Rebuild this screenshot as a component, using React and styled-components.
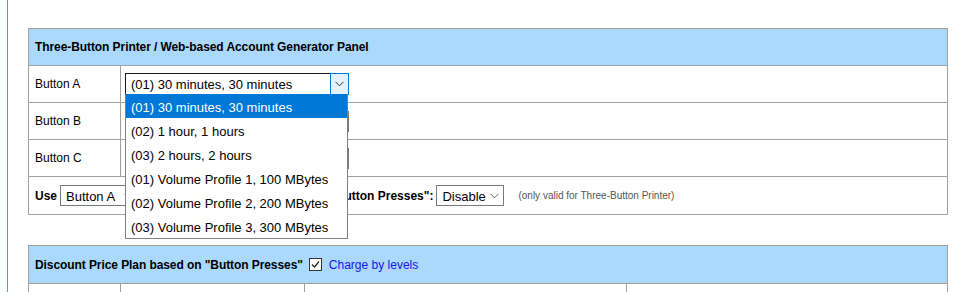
import styled, { createGlobalStyle } from "styled-components";

const GlobalStyle = createGlobalStyle`
  html, body {
    margin: 0;
    padding: 0;
    background: #ffffff;
    font-family: "Liberation Sans", Arial, sans-serif;
    font-size: 12px;
    color: #000;
  }
`;

const Frame = styled.div`
  margin-left: 7px;
  border-left: 1px solid #4a9ee0;
  padding: 28px 0 0 20px;
  min-height: 100vh;
  box-sizing: border-box;
`;

const Panel = styled.table`
  width: 920px;
  border-collapse: collapse;
  border: 1px solid #a0a0a0;
  & + & {
    margin-top: 30px;
  }
`;

const HeadCell = styled.td`
  background: #aad9fd;
  border: 1px solid #a0a0a0;
  height: ${(p) => p.$h || 36}px;
  padding: 0 6px;
  font-weight: bold;
  white-space: nowrap;
  letter-spacing: -0.08px;
`;

const Cell = styled.td`
  border: 1px solid #a0a0a0;
  height: ${(p) => p.$h || 37}px;
  padding: 0 ${(p) => (p.$tight ? 4 : 6)}px;
  width: ${(p) => (p.$w ? p.$w + "px" : "auto")};
  box-sizing: border-box;
  white-space: nowrap;
`;

const Inline = styled.div`
  display: flex;
  align-items: center;
`;

const Bold = styled.span`
  font-weight: bold;
  margin-right: ${(p) => p.$mr || 0}px;
  margin-left: ${(p) => p.$ml || 0}px;
`;

const SelectWrap = styled.div`
  position: relative;
  width: ${(p) => p.$w}px;
`;

const SelectBox = styled.div`
  display: flex;
  align-items: center;
  height: ${(p) => p.$h || 21}px;
  width: ${(p) => p.$w}px;
  box-sizing: border-box;
  border: 1px solid ${(p) => (p.$focused ? "#1a1a1a" : "#7a7a7a")};
  background: #fff;
  font-size: 13px;
  padding-left: 5px;
`;

const SelectText = styled.span`
  flex: 1;
  white-space: nowrap;
  padding-top: 1px;
`;

const Arrow = styled.span`
  display: flex;
  align-items: center;
  justify-content: center;
  width: ${(p) => (p.$focused ? 17 : 16)}px;
  align-self: stretch;
  margin: ${(p) => (p.$focused ? "-1px -1px -1px 0" : "0 1px 0 0")};
  background: ${(p) => (p.$focused ? "#e5f1fb" : "transparent")};
  border: ${(p) => (p.$focused ? "1px solid #0078d7" : "none")};
`;

const Dropdown = styled.div`
  position: absolute;
  top: 21px;
  left: 0;
  width: 223px;
  box-sizing: border-box;
  border: 1px solid #808080;
  border-top: none;
  background: #fff;
  z-index: 5;
`;

const Option = styled.div`
  height: 24px;
  box-sizing: border-box;
  padding: 2px 0 0 5px;
  line-height: 24px;
  font-size: 13px;
  white-space: nowrap;
  background: ${(p) => (p.$active ? "#0078d7" : "#fff")};
  color: ${(p) => (p.$active ? "#fff" : "#000")};
`;

const Note = styled.span`
  font-size: 10px;
  color: #555;
  margin-left: 14px;
`;

const Check = styled.span`
  display: inline-flex;
  width: 13px;
  height: 13px;
  box-sizing: border-box;
  border: 1px solid #333;
  background: #fff;
  margin: 0 7px 0 6px;
`;

const Link = styled.span`
  color: #1515ee;
  font-weight: normal;
  letter-spacing: 0;
`;

const Chevron = ({ color = "#555" }) => (
  <svg width="9" height="6" viewBox="0 0 9 6">
    <polyline points="0.5,0.8 4.5,4.8 8.5,0.8" fill="none" stroke={color} strokeWidth="1" />
  </svg>
);

const Select = ({ value, w, focused, h }) => (
  <SelectBox $w={w} $focused={focused} $h={h}>
    <SelectText>{value}</SelectText>
    <Arrow $focused={focused}>
      <Chevron color={focused ? "#333" : "#666"} />
    </Arrow>
  </SelectBox>
);

const options = [
  "(01) 30 minutes, 30 minutes",
  "(02) 1 hour, 1 hours",
  "(03) 2 hours, 2 hours",
  "(01) Volume Profile 1, 100 MBytes",
  "(02) Volume Profile 2, 200 MBytes",
  "(03) Volume Profile 3, 300 MBytes",
];

export default function App() {
  return (
    <>
      <GlobalStyle />
      <Frame>
        <Panel>
          <tbody>
            <tr>
              <HeadCell colSpan={2}>Three-Button Printer / Web-based Account Generator Panel</HeadCell>
            </tr>
            <tr>
              <Cell $w={92}>Button A</Cell>
              <Cell $tight>
                <SelectWrap $w={224}>
                  <Select value={options[0]} w={224} h={22} focused />
                  <Dropdown>
                    {options.map((o, i) => (
                      <Option key={i} $active={i === 0}>
                        {o}
                      </Option>
                    ))}
                  </Dropdown>
                </SelectWrap>
              </Cell>
            </tr>
            <tr>
              <Cell $w={92}>Button B</Cell>
              <Cell $tight>
                <Select value={options[1]} w={224} />
              </Cell>
            </tr>
            <tr>
              <Cell $w={92}>Button C</Cell>
              <Cell $tight>
                <Select value={options[2]} w={224} />
              </Cell>
            </tr>
            <tr>
              <Cell colSpan={2} $h={38}>
                <Inline>
                  <Bold $mr={3}>Use</Bold>
                  <Select value="Button A" w={78} />
                  <Bold $ml={4} $mr={3}>as the counter for the number of "Button Presses":</Bold>
                  <Select value="Disable" w={68} />
                  <Note>(only valid for Three-Button Printer)</Note>
                </Inline>
              </Cell>
            </tr>
          </tbody>
        </Panel>
        <Panel>
          <tbody>
            <tr>
              <HeadCell colSpan={4} $h={37}>
                <Inline>
                  Discount Price Plan based on "Button Presses"
                  <Check>
                    <svg width="11" height="11" viewBox="0 0 11 11">
                      <polyline points="2,5.5 4.5,8 9,2.5" fill="none" stroke="#222" strokeWidth="1.2" />
                    </svg>
                  </Check>
                  <Link>Charge by levels</Link>
                </Inline>
              </HeadCell>
            </tr>
            <tr>
              <Cell $w={92} $h={30}></Cell>
              <Cell $w={184} $h={30}></Cell>
              <Cell $w={322} $h={30}></Cell>
              <Cell $h={30}></Cell>
            </tr>
          </tbody>
        </Panel>
      </Frame>
    </>
  );
}
